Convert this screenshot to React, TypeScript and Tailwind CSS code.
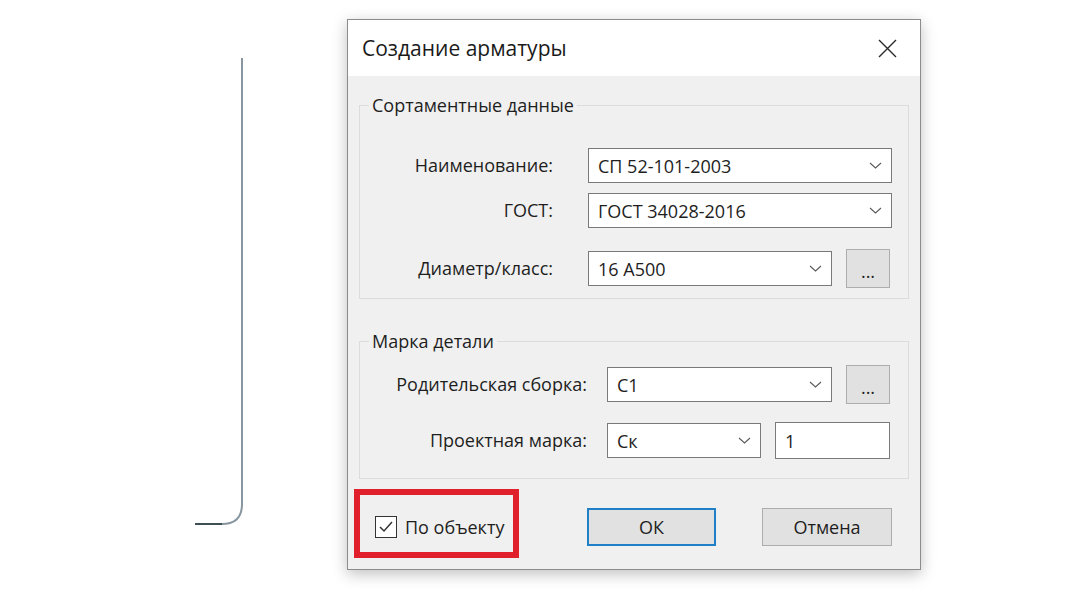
import React from 'react';

const Chevron: React.FC = () => (
  <svg width="13" height="7" viewBox="0 0 13 7" className="ml-auto mr-[9px] shrink-0">
    <path d="M1 1 L6.5 6 L12 1" fill="none" stroke="#5a5a5a" strokeWidth="1.1" />
  </svg>
);

const Combo: React.FC<{ value: string; width: string }> = ({ value, width }) => (
  <div className={`${width} h-[35px] bg-white border border-[#7a7a7a] flex items-center pl-[9px] shrink-0`}>
    <span className="text-[18px] text-[#1e1e1e] leading-none">{value}</span>
    <Chevron />
  </div>
);

const DotsButton: React.FC = () => (
  <div className="w-[44px] h-[39px] bg-[#e1e1e1] border border-[#adadad] flex items-center justify-center shrink-0">
    <span className="text-[18px] text-[#1e1e1e] leading-none pt-[4px]">...</span>
  </div>
);

const App: React.FC = () => {
  return (
    <div className="w-[1088px] h-[600px] bg-white flex items-start font-['Open_Sans',sans-serif] text-[#1e1e1e]">
      {/* decorative connector line on the left */}
      <svg className="ml-[190px] mt-[56px] shrink-0" width="56" height="472" viewBox="0 0 56 472">
        <path d="M52 2 L52 448 Q52 468 32 468" fill="none" stroke="#8796a0" strokeWidth="2" />
        <path d="M32 468 L5 468" fill="none" stroke="#3e4e55" strokeWidth="2" />
      </svg>

      {/* dialog */}
      <div className="ml-[101px] mt-[19px] w-[574px] h-[551px] border border-[#8c8c8c] shadow-[0_4px_14px_rgba(0,0,0,0.25)] flex flex-col shrink-0">
        <header className="h-[56px] bg-white flex items-center justify-between pl-[14px] pr-[23px] shrink-0">
          <span className="text-[21px] leading-none text-[#1a1a1a]">Создание арматуры</span>
          <svg width="19" height="19" viewBox="0 0 19 19">
            <path d="M1 1 L18 18 M18 1 L1 18" stroke="#2a2a2a" strokeWidth="1.4" />
          </svg>
        </header>

        <main className="flex-1 bg-[#f0f0f0] flex flex-col">
          <div className="px-[11px]">
            <fieldset className="mt-[17px] border border-[#dcdcdc] pb-[10px]">
              <legend className="ml-[9px] px-[3px] text-[18px] leading-[24px]">Сортаментные данные</legend>
              <div className="flex flex-col pt-[31px]">
                <div className="flex items-center">
                  <div className="w-[228px] pr-[35px] text-right text-[18px]">Наименование:</div>
                  <Combo value="СП 52-101-2003" width="w-[304px]" />
                </div>
                <div className="flex items-center mt-[10px]">
                  <div className="w-[228px] pr-[35px] text-right text-[18px]">ГОСТ:</div>
                  <Combo value="ГОСТ 34028-2016" width="w-[304px]" />
                </div>
                <div className="flex items-center mt-[21px]">
                  <div className="w-[228px] pr-[35px] text-right text-[18px]">Диаметр/класс:</div>
                  <Combo value="16 А500" width="w-[244px]" />
                  <div className="ml-[14px]">
                    <DotsButton />
                  </div>
                </div>
              </div>
            </fieldset>

            <fieldset className="mt-[30px] border border-[#dcdcdc] pb-[19px]">
              <legend className="ml-[9px] px-[3px] text-[18px] leading-[24px]">Марка детали</legend>
              <div className="flex flex-col pt-[12px]">
                <div className="flex items-center">
                  <div className="w-[247px] pr-[20px] text-right text-[18px]">Родительская сборка:</div>
                  <Combo value="С1" width="w-[225px]" />
                  <div className="ml-[14px]">
                    <DotsButton />
                  </div>
                </div>
                <div className="flex items-center mt-[18px]">
                  <div className="w-[247px] pr-[20px] text-right text-[18px]">Проектная марка:</div>
                  <Combo value="Ск" width="w-[154px]" />
                  <div className="ml-[14px] w-[115px] h-[37px] bg-white border border-[#7a7a7a] flex items-center pl-[9px]">
                    <span className="text-[18px] leading-none">1</span>
                  </div>
                </div>
              </div>
            </fieldset>
          </div>

          <div className="flex items-start pl-[6px] mt-[10px]">
            <div className="w-[165px] h-[69px] border-[6px] border-[#e0202a] flex items-center pl-[15px] pt-[6px]">
              <div className="w-[22px] h-[22px] border border-[#333] bg-white flex items-center justify-center shrink-0">
                <svg width="16" height="14" viewBox="0 0 16 14">
                  <path d="M2 7 L6 11 L14 2" fill="none" stroke="#333" strokeWidth="1.5" />
                </svg>
              </div>
              <span className="ml-[8px] text-[18px] leading-none">По объекту</span>
            </div>
            <div className="ml-[68px] mt-[19px] w-[129px] h-[38px] bg-[#e1e1e1] border-2 border-[#1f7fc7] flex items-center justify-center">
              <span className="text-[18px] leading-none">ОК</span>
            </div>
            <div className="ml-[46px] mt-[19px] w-[130px] h-[38px] bg-[#e1e1e1] border border-[#adadad] flex items-center justify-center">
              <span className="text-[18px] leading-none">Отмена</span>
            </div>
          </div>
        </main>
      </div>
    </div>
  );
};

export default App;
